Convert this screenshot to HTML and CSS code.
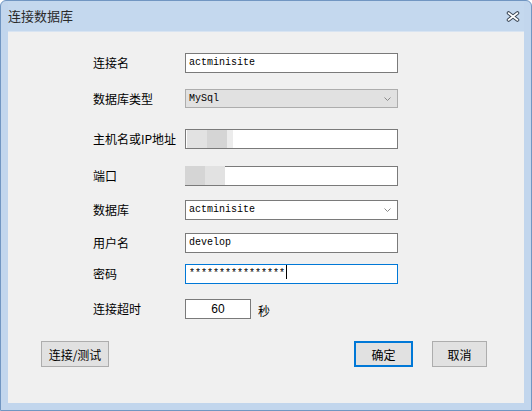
FILE: index.html
```html
<!DOCTYPE html>
<html>
<head>
    <title>连接数据库</title>
    <link rel="stylesheet" href="styles.css">
</head>
<body>
    <div class="window">
        <div class="titlebar">
            <span class="title">连接数据库</span>
            <svg class="close" width="14" height="11" viewBox="0 0 14 11">
                <path d="M2.5 2 L11.5 9 M11.5 2 L2.5 9" stroke="#3b4756" stroke-width="3.6" stroke-linecap="round"/>
                <path d="M2.5 2 L11.5 9 M11.5 2 L2.5 9" stroke="#ffffff" stroke-width="1.6" stroke-linecap="round"/>
            </svg>
        </div>

        <div class="client">
            <div class="form">
                <div class="label">连接名</div>
                <div class="field">actminisite</div>

                <div class="label">数据库类型</div>
                <div class="field select disabled">MySql
                    <svg class="arrow" width="7" height="4" viewBox="0 0 7 4"><path d="M0.5 0.5 L3.5 3.5 L6.5 0.5" fill="none" stroke="#8a8a8a" stroke-width="1"/></svg>
                </div>

                <div class="label">主机名或IP地址</div>
                <div class="field">
                    <div class="blur host">
                        <span class="b1"></span><span class="b2"></span><span class="b3"></span>
                    </div>
                </div>

                <div class="label">端口</div>
                <div class="field">
                    <div class="blur port">
                        <span class="b2"></span><span class="b1"></span>
                    </div>
                </div>

                <div class="label">数据库</div>
                <div class="field select">actminisite
                    <svg class="arrow" width="7" height="4" viewBox="0 0 7 4"><path d="M0.5 0.5 L3.5 3.5 L6.5 0.5" fill="none" stroke="#8a8a8a" stroke-width="1"/></svg>
                </div>

                <div class="label">用户名</div>
                <div class="field">develop</div>

                <div class="label">密码</div>
                <div class="field focused">****************<span class="caret"></span></div>

                <div class="label">连接超时</div>
                <div class="timeout">
                    <div class="field short">60</div>
                    <span class="unit">秒</span>
                </div>
            </div>

            <div class="buttons">
                <button class="btn test">连接/测试</button>
                <span class="spacer"></span>
                <button class="btn ok">确定</button>
                <button class="btn cancel">取消</button>
            </div>
        </div>
    </div>
</body>
</html>
```

FILE: styles.css
```css
body {
    margin: 0;
    font-family: "Noto Sans CJK SC", "Noto Sans", sans-serif;
    font-size: 12px;
    color: #000;
    background: #fff;
}
.window {
    width: 532px;
    height: 411px;
    box-sizing: border-box;
    background: #c2d6ed;
    border: 1px solid #7196c2;
    border-radius: 6px 6px 0 0;
    padding: 0 7px 7px;
    display: flex;
    flex-direction: column;
}
.titlebar {
    height: 30px;
    display: flex;
    align-items: center;
    justify-content: space-between;
    background: #c4d8ee;
}
.title {
    font-size: 13px;
    color: #2a2a2a;
    margin-top: -1px;
}
.close {
    margin-right: 4px;
    margin-top: 1px;
}
.client {
    flex: 1;
    background: #f0f0f0;
    border-top: 1px solid #d8e4f2;
    box-sizing: border-box;
}
.form {
    display: grid;
    grid-template-columns: 92px 213px;
    grid-template-rows: 36px 40px 37px 34px 33px 31px 35px 20px;
    padding: 21px 0 0 85px;
}
.label {
    height: 20px;
    line-height: 20px;
    white-space: nowrap;
}
.field {
    position: relative;
    height: 20px;
    box-sizing: border-box;
    background: #fff;
    border: 1px solid #7a7a7a;
    padding-left: 3px;
    font-family: "Liberation Mono", monospace;
    font-size: 10px;
    line-height: 18px;
    white-space: nowrap;
}
.select.disabled {
    background: #e1e1e1;
    border-color: #adadad;
    height: 19px;
    line-height: 17px;
}
.arrow {
    position: absolute;
    right: 6px;
    top: 7px;
}
.focused {
    border-color: #0078d7;
}
.caret {
    display: inline-block;
    width: 1px;
    height: 14px;
    background: #000;
    vertical-align: middle;
    margin-left: 1px;
    margin-top: -2px;
}
.blur {
    position: absolute;
    display: flex;
}
.blur span {
    display: block;
    height: 100%;
}
.blur.host {
    left: 1px;
    top: 0;
    height: 18px;
}
.blur.port {
    left: -1px;
    top: -1px;
    height: 19px;
}
.blur .b1 { width: 20px; background: #e2e2e2; }
.blur .b2 { width: 20px; background: #d5d5d5; }
.blur .b3 { width: 6px; background: #ececec; }
.timeout {
    display: flex;
    align-items: center;
    gap: 7px;
}
.field.short {
    width: 66px;
    padding: 0;
    text-align: center;
    font-family: "Liberation Sans", sans-serif;
    font-size: 12px;
}
.unit {
    margin-top: 2px;
}
.buttons {
    display: flex;
    align-items: center;
    gap: 19px;
    margin-top: 22px;
    padding: 0 37px 0 33px;
}
.spacer {
    flex: 1;
}
.btn {
    height: 26px;
    box-sizing: border-box;
    background: #e1e1e1;
    border: 1px solid #adadad;
    font-family: "Noto Sans CJK SC", sans-serif;
    font-size: 12px;
    color: #000;
    padding: 0;
    border-radius: 0;
}
.test { width: 68px; }
.ok {
    width: 59px;
    border: 2px solid #0078d7;
}
.cancel { width: 55px; }
```
